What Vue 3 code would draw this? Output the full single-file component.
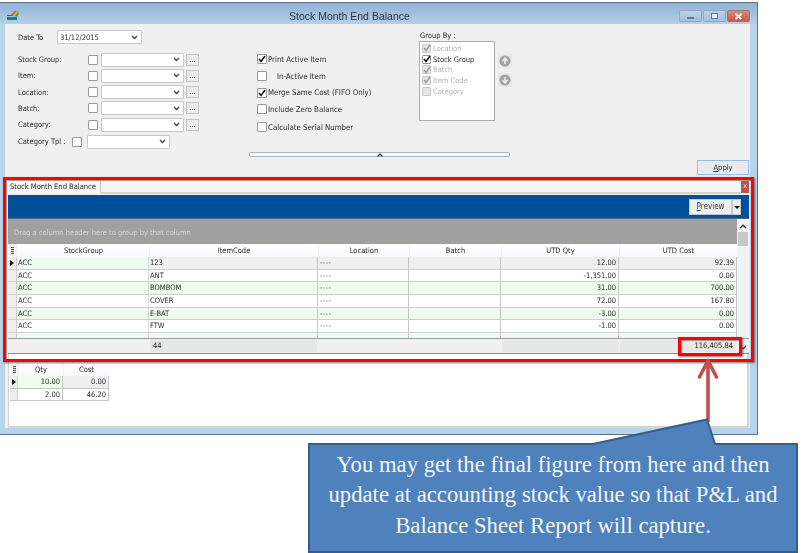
<script setup>
const filters = ['Stock Group:', 'Item:', 'Location:', 'Batch:', 'Category:']
const options = [
  { text: 'Print Active Item', on: true },
  { text: 'In-Active Item', on: false, indent: true },
  { text: 'Merge Same Cost (FIFO Only)', on: true },
  { text: 'Include Zero Balance', on: false },
  { text: 'Calculate Serial Number', on: false, last: true }
]
const groups = [
  { text: 'Location', on: true, off: true },
  { text: 'Stock Group', on: true, off: false },
  { text: 'Batch', on: true, off: true },
  { text: 'Item Code', on: true, off: true },
  { text: 'Category', on: false, off: true }
]
const columns = ['StockGroup', 'ItemCode', 'Location', 'Batch', 'UTD Qty', 'UTD Cost']
const rows = [
  ['ACC', '123', '----', '', '12.00', '92.39'],
  ['ACC', 'ANT', '----', '', '-1,351.00', '0.00'],
  ['ACC', 'BOMBOM', '----', '', '31.00', '700.00'],
  ['ACC', 'COVER', '----', '', '72.00', '167.80'],
  ['ACC', 'E-BAT', '----', '', '-3.00', '0.00'],
  ['ACC', 'FTW', '----', '', '-1.00', '0.00'],
  ['', '', '', '', '', '']
]
const detail = [['10.00', '0.00'], ['2.00', '46.20']]
</script>

<template>
  <div class="page">
    <div class="window">
      <header class="titlebar">
        <svg class="logo" width="13" height="11" viewBox="0 0 13 11">
          <rect x="0" y="7" width="10" height="3" fill="#1d7f7f" />
          <rect x="0" y="5" width="9" height="1" fill="#4a5a78" />
          <path d="M5 6 L10 1 L12 1 L9 6 Z" fill="#e8b020" />
          <path d="M8 6 L11 2 L12 3 L10 7 Z" fill="#45a545" />
          <path d="M4 5 L8 1 L10 1 L6 5 Z" fill="#d84a3a" />
        </svg>
        <span class="title">Stock Month End Balance</span>
        <div class="caption">
          <span class="capbtn"><i class="min"></i></span>
          <span class="capbtn"><i class="max"></i></span>
          <span class="capbtn close">
            <svg width="9" height="7" viewBox="0 0 9 7"><path d="M1.500 .8 L7.500 6.200 M7.500 .8 L1.500 6.200" stroke="#fff" stroke-width="1.800" /></svg>
          </span>
        </div>
      </header>

      <div class="client">
        <section class="filters">
          <div class="left">
            <div class="date-row">
              <span class="date-label">Date To</span>
              <div class="combo date">
                <span>31/12/2015</span>
                <svg class="chev" width="7" height="5" viewBox="0 0 7 5"><path d="M1 1 L3.500 3.500 L6 1" fill="none" stroke="#444" stroke-width="1.300" /></svg>
              </div>
            </div>
            <div v-for="f in filters" :key="f" class="filter-row">
              <span class="filter-label">{{ f }}</span>
              <span class="box"></span>
              <div class="combo wide">
                <svg class="chev" width="7" height="5" viewBox="0 0 7 5"><path d="M1 1 L3.500 3.500 L6 1" fill="none" stroke="#444" stroke-width="1.300" /></svg>
              </div>
              <span class="dots">...</span>
            </div>
            <div class="tpl-row">
              <span class="tpl-label">Category Tpl :</span>
              <span class="box"></span>
              <div class="combo tpl">
                <svg class="chev" width="7" height="5" viewBox="0 0 7 5"><path d="M1 1 L3.500 3.500 L6 1" fill="none" stroke="#444" stroke-width="1.300" /></svg>
              </div>
            </div>
          </div>

          <div class="options">
            <label v-for="o in options" :key="o.text" class="option" :class="{ last: o.last }">
              <span class="box">
                <svg v-if="o.on" width="8" height="8" viewBox="0 0 8 8"><path d="M1 4 L3 6.500 L7 1" fill="none" stroke="#111" stroke-width="1.500" /></svg>
              </span>
              <span :class="{ indent: o.indent }">{{ o.text }}</span>
            </label>
          </div>

          <div class="group-col">
            <div class="group-label">Group By :</div>
            <div class="group-wrap">
              <div class="group-list">
                <div v-for="g in groups" :key="g.text" class="group-item" :class="{ off: g.off }">
                  <span class="box small">
                    <svg v-if="g.on" width="8" height="8" viewBox="0 0 8 8"><path d="M1 4 L3 6.500 L7 1" fill="none" :stroke="g.off ? '#9a9a9a' : '#111'" stroke-width="1.500" /></svg>
                  </span>
                  <span>{{ g.text }}</span>
                </div>
              </div>
              <div class="movers">
                <span class="mover">
                  <svg width="12" height="12" viewBox="0 0 12 12"><circle cx="6" cy="6" r="5.600" fill="#a4a4a4" /><path d="M6 9 V3.500 M3.500 6 L6 3.200 L8.500 6" fill="none" stroke="#eee" stroke-width="1.500" /></svg>
                </span>
                <span class="mover">
                  <svg width="12" height="12" viewBox="0 0 12 12"><circle cx="6" cy="6" r="5.600" fill="#a4a4a4" /><path d="M6 3 V8.500 M3.500 6 L6 8.800 L8.500 6" fill="none" stroke="#eee" stroke-width="1.500" /></svg>
                </span>
              </div>
            </div>
          </div>

          <div class="collapse">
            <svg width="6" height="4" viewBox="0 0 6 4"><path d="M.5 3.500 L3 1 L5.500 3.500" fill="none" stroke="#222" stroke-width="1.200" /></svg>
          </div>

          <button class="apply" type="button"><u>A</u>pply</button>
        </section>

        <section class="panel">
          <div class="tabstrip">
            <span class="tab">Stock Month End Balance</span>
            <span class="strip"></span>
            <span class="tabclose">x</span>
          </div>
          <div class="toolbar">
            <span class="preview"><u>P</u>review</span>
            <span class="preview-drop"><i></i></span>
          </div>

          <div class="grid-area">
            <div class="grid-main">
              <div class="drag">Drag a column header here to group by that column</div>
              <div class="table head">
                <span class="corner"><b></b></span>
                <span v-for="c in columns" :key="c" class="th">{{ c }}</span>
              </div>
              <div v-for="(r, i) in rows" :key="i" class="table row" :class="[i % 2 === 0 ? 'green' : 'white', { current: i === 0 }]">
                <span class="ind"><i v-if="i === 0"></i></span>
                <span v-for="(cell, j) in r" :key="j" class="td" :class="[{ num: j > 3, dash: j === 2 }]">{{ cell }}</span>
              </div>
            </div>
            <div class="scroll">
              <svg width="8" height="5" viewBox="0 0 8 5"><path d="M1 4 L4 1.200 L7 4" fill="none" stroke="#333" stroke-width="1.400" /></svg>
              <span class="thumb"></span>
            </div>
          </div>

          <div class="table footer">
            <span class="fcell"></span>
            <span class="fcell"></span>
            <span class="fcell sum">44</span>
            <span class="fcell"></span>
            <span class="fcell"></span>
            <span class="fcell sum"></span>
            <span class="fcell sum total">116,405.84</span>
            <svg class="down" width="8" height="5" viewBox="0 0 8 5"><path d="M1 1 L4 3.800 L7 1" fill="none" stroke="#444" stroke-width="1.300" /></svg>
          </div>

          <div class="lower">
            <div class="mini head">
              <span class="corner"><b></b></span>
              <span class="th">Qty</span>
              <span class="th">Cost</span>
            </div>
            <div v-for="(d, i) in detail" :key="i" class="mini mrow" :class="{ current: i === 0 }">
              <span class="ind"><i v-if="i === 0"></i></span>
              <span class="td num">{{ d[0] }}</span>
              <span class="td num">{{ d[1] }}</span>
            </div>
          </div>
        </section>
      </div>
    </div>

    <div class="redbox big"></div>
    <div class="redbox small-red"></div>

    <svg class="overlay" width="812" height="553" viewBox="0 0 812 553">
      <path d="M708 421 V362 M699.500 377 L708 360.500 L716.500 377" fill="none" stroke="#c0504d" stroke-width="3.600" stroke-linecap="round" stroke-linejoin="round" />
      <path d="M309 444 H593 L707 419.500 L715 444 H797 V552 H309 Z" fill="#4f81bd" stroke="#385d8a" stroke-width="2" />
    </svg>
    <p class="note">You may get the final figure from here and then<br />update at accounting stock value so that P&amp;L and<br />Balance Sheet Report will capture.</p>
  </div>
</template>

<style>
html, body { margin: 0; background: #fff; }
</style>

<style scoped>
.page {
  position: relative;
  width: 812px;
  height: 553px;
  overflow: hidden;
  background: #fff;
  font-family: "DejaVu Sans Condensed", "DejaVu Sans", sans-serif;
  font-stretch: condensed;
  font-size: 7.500px;
  color: #2a2a2a;
}
.window {
  box-sizing: border-box;
  width: 758px;
  height: 433px;
  margin-top: 2px;
  padding: 0 8px 6px 5px;
  background: #b8d3ec;
  border: solid #5d7485;
  border-width: 1px 1px 1px 0;
  filter: blur(0.45px);
  display: flex;
  flex-direction: column;
}
.titlebar {
  height: 21px;
  box-sizing: border-box;
  margin: 0 -8px 0 -5px;
  padding: 5px 7px 0 7px;
  background: linear-gradient(#8fb2d6, #b5cfe9);
  display: flex;
  align-items: center;
  position: relative;
}
.logo { margin-top: -1px; }
.title {
  position: absolute;
  left: 289px;
  top: 7px;
  font-family: "Liberation Sans", Arial, sans-serif;
  font-stretch: normal;
  font-size: 10.500px;
  color: #333;
}
.caption { margin-left: auto; display: flex; gap: 1px; }
.capbtn {
  box-sizing: border-box;
  width: 23px;
  height: 12px;
  border: 1px solid #8fa9c2;
  border-radius: 2px;
  background: linear-gradient(#bcd1e6, #a5c0dc);
  display: flex;
  align-items: center;
  justify-content: center;
}
.capbtn.close { background: linear-gradient(#dc8a74, #c65a48); border-color: #a97268; }
.min { width: 7px; height: 2px; background: #f2f6fa; border: 1px solid #5f7a95; box-sizing: border-box; margin-top: 3px; }
.max { width: 7px; height: 6px; border: 1px solid #5f7a95; background: #e8eef5; box-sizing: border-box; }
.client {
  flex: 1;
  min-height: 0;
  width: 745px;
  background: #f0f0f0;
  display: flex;
  flex-direction: column;
}

/* filter area */
.filters {
  height: 153px;
  display: grid;
  grid-template-columns: 244px 170px 95px 1fr;
  grid-template-rows: 128px 25px;
}
.left { grid-row: 1 / 3; padding: 6px 0 0 13px; }
.date-row { display: flex; align-items: center; height: 14px; margin-bottom: 7.500px; }
.date-label { width: 39px; }
.combo {
  box-sizing: border-box;
  height: 14px;
  border: 1px solid #c8c8c8;
  border-radius: 1px;
  background: #fff;
  display: flex;
  align-items: center;
  padding: 0 3px 0 2px;
  position: relative;
}
.chev { margin-left: auto; }
.date { width: 85px; }
.filter-row { display: flex; align-items: center; height: 16.250px; }
.filter-label { width: 70px; }
.wide { width: 83px; height: 14px; margin-left: 3px; }
.dots {
  box-sizing: border-box;
  width: 13px;
  height: 12px;
  margin-left: 2px;
  border: 1px solid #c4c4c4;
  background: #ececec;
  text-align: center;
  line-height: 10px;
  color: #555;
}
.box {
  box-sizing: border-box;
  flex: none;
  width: 10px;
  height: 10px;
  border: 1px solid #999;
  background: #fff;
  display: inline-flex;
  align-items: center;
  justify-content: center;
  border-radius: 1px;
}
.box svg { flex: none; }
.tpl-row { display: flex; align-items: center; height: 14px; margin-top: 2px; }
.tpl-label { width: 54px; }
.tpl { width: 83px; margin-left: 5px; }

.options { padding: 27px 0 0 8px; font-size: 7.800px; }
.option { display: flex; align-items: center; gap: 1px; height: 16.700px; }
.option.last { margin-top: 1px; }
.indent { margin-left: 9px; }

.group-col { padding-top: 7px; }
.group-label { height: 10px; line-height: 10px; margin-left: 1px; }
.group-wrap { display: flex; }
.group-list {
  box-sizing: border-box;
  width: 76px;
  height: 80px;
  border: 1px solid #a8acb0;
  background: #fff;
  padding: 1px 0 0 2px;
}
.group-item { display: flex; align-items: center; gap: 2px; height: 10.700px; color: #2a2a2a; }
.group-item.off { color: #b4b4b4; }
.group-item.off .box { background: #e6e6e6; border-color: #c8c8c8; }
.box.small { width: 9px; height: 9px; }
.movers { margin: 13px 0 0 3px; display: flex; flex-direction: column; gap: 5px; }
.mover { width: 14px; height: 14px; background: #e8e8e8; display: flex; align-items: center; justify-content: center; }

.collapse {
  grid-column: 2 / 4;
  grid-row: 2;
  box-sizing: border-box;
  width: 261px;
  height: 5px;
  border: 1px solid #aab6bf;
  border-radius: 2px;
  background: #f7f9fb;
  display: flex;
  justify-content: center;
  align-items: center;
}
.apply {
  grid-column: 4;
  grid-row: 1 / 3;
  justify-self: end;
  align-self: end;
  box-sizing: border-box;
  width: 52px;
  height: 15px;
  margin: 0 1px 2px 0;
  padding: 0;
  border: 1px solid #8fc1ee;
  background: #eaeaea;
  font: condensed 7.500px "DejaVu Sans Condensed", "DejaVu Sans", sans-serif;
  color: #2a2a2a;
}

/* lower panel */
.panel { flex: 1; min-height: 0; margin-left: 3px; width: 741px; display: flex; flex-direction: column; background: #fff; }
.tabstrip { height: 18px; box-sizing: border-box; padding-top: 4px; display: flex; background: #f0f0f0; }
.tab {
  box-sizing: border-box;
  width: 93px;
  height: 12px;
  padding-left: 2px;
  line-height: 11px;
  background: #f6f6f6;
  border-right: 1px solid #c8c8c8;
  white-space: nowrap;
}
.strip { flex: 1; height: 11px; border-bottom: 2px solid #d4d4d4; background: #f4f4f4; }
.tabclose {
  width: 8px;
  height: 12px;
  background: #c0504f;
  color: #f4d8d8;
  font-size: 7px;
  line-height: 11px;
  text-align: center;
}
.toolbar {
  height: 24px;
  background: #004f9b;
  display: flex;
  align-items: flex-start;
  justify-content: flex-end;
  padding: 4px 8px 0 0;
  box-sizing: border-box;
  border-bottom: 1px solid #4a6c90;
}
.preview {
  box-sizing: border-box;
  width: 43px;
  height: 16px;
  background: #eeeeee;
  border: 1px solid #c8c8c8;
  text-align: center;
  line-height: 14px;
  color: #444;
  font-size: 8px;
}
.preview-drop {
  box-sizing: border-box;
  width: 9px;
  height: 16px;
  background: #eeeeee;
  border: 1px solid #c8c8c8;
  display: flex;
  align-items: center;
  justify-content: center;
}
.preview-drop i { border: 3px solid transparent; border-top: 3px solid #111; border-bottom: 0; }

.grid-area { height: 119px; display: flex; overflow: hidden; }
.grid-main { width: 729px; flex: none; }
.drag { height: 25px; background: #a0a0a0; color: #d6d6d6; line-height: 27px; padding-left: 6px; }
.table { display: grid; grid-template-columns: 9px 132px 169px 91px 92px 118px 118px; }
.head { height: 13px; background: #fff; }
.head .th { text-align: center; line-height: 13px; border-left: 1px solid #eef4fa; background: linear-gradient(#fff, #f6f9fc); }
.corner { display: flex; align-items: center; justify-content: center; background: #f4f4f4; }
.corner b { width: 3px; height: 7px; background: repeating-linear-gradient(#555 0 1px, #ddd 1px 2px); }
.row { height: 12.700px; border-bottom: 1px solid #cfcfcf; box-sizing: border-box; line-height: 12px; }
.row.green .td { background: #eefbee; }
.row.white .td { background: #fff; }
.row.current .td { background: #efefef; }
.row.current .td:nth-child(2) { background: #eefbee; }
.td { box-sizing: border-box; padding: 0 2px 0 1px; border-right: 1px solid #c6c6c6; overflow: hidden; white-space: nowrap; }
.td:nth-child(2) { border-right-color: #d8d8d8; }
.td.dash { color: #555; letter-spacing: .4px; padding-left: 2px; }
.num { text-align: right; }
.ind { background: #eeeeee; border-right: 1px solid #cfcfcf; display: flex; align-items: center; justify-content: center; box-sizing: border-box; }
.ind i { border: 3.500px solid transparent; border-left: 4px solid #111; border-right: 0; }
.scroll {
  width: 12px;
  background: #f2f2f2;
  display: flex;
  flex-direction: column;
  align-items: center;
  padding-top: 5px;
  box-sizing: border-box;
}
.thumb { width: 10px; height: 14px; margin-top: 3px; background: #c8c8c8; }
.footer {
  height: 16px;
  box-sizing: border-box;
  background: #f0f0f0;
  border-top: 1px solid #9a9a9a;
  border-bottom: 1px solid #8c8c8c;
  position: relative;
  line-height: 14px;
}
.fcell { box-sizing: border-box; padding: 0 3px; }
.fcell.sum { background: #e6e8e8; margin: 1px; line-height: 12px; }
.total { text-align: right; }
.down { position: absolute; right: 2px; top: 6px; }
.lower {
  flex: 1;
  min-height: 0;
  padding: 9px 0 0 1px;
  background: #fff;
  border: solid #d4d4d4;
  border-width: 0 2px 2px 1px;
}
.mini { display: grid; grid-template-columns: 8px 45px 46px; width: 99px; }
.mrow { height: 12.500px; box-sizing: border-box; border-bottom: 1px solid #c6c6c6; line-height: 12px; }
.mrow .td:nth-child(2) { border-right-color: #c6c6c6; }
.mrow.current .td:nth-child(2) { background: #eefbee; }
.mrow.current .td:nth-child(3) { background: #efefef; }

/* annotations */
.redbox {
  position: absolute;
  box-sizing: border-box;
  border: 3px solid #f00;
  box-shadow: 1px 1px 2px rgba(60, 60, 60, .7), inset 1px 1px 1px rgba(60, 60, 60, .5);
  pointer-events: none;
}
.big { left: 3px; top: 177px; width: 751px; height: 185px; }
.small-red { left: 678px; top: 337px; width: 64px; height: 19px; }
.overlay { position: absolute; left: 0; top: 0; }
.note {
  position: absolute;
  left: 308px;
  top: 444px;
  width: 490px;
  margin: 0;
  font-family: "Liberation Serif", "Times New Roman", serif;
  font-stretch: normal;
  font-size: 22.700px;
  line-height: 30.300px;
  text-align: center;
  color: #f2f6fb;
  white-space: nowrap;
  padding-top: 6px;
}
</style>
